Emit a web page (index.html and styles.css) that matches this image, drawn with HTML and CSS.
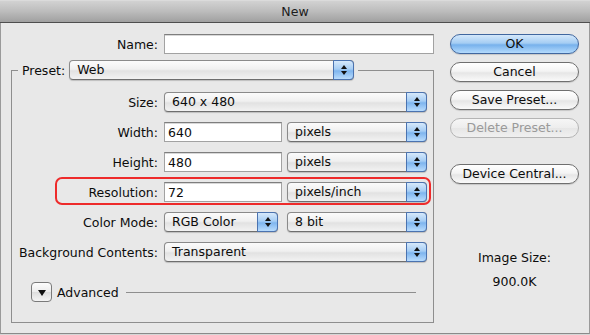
FILE: index.html
```html
<!DOCTYPE html>
<html>
<head>
<meta charset="utf-8">
<link rel="stylesheet" href="styles.css">
</head>
<body>
<div class="window">
  <div class="titlebar">New</div>
  <div class="main">
    <div class="left">
      <div class="row name-row">
        <span class="label">Name:</span>
        <div class="controls"><div class="input name-input"></div></div>
      </div>
      <div class="group">
        <div class="legend">
          <span class="legend-label">Preset:</span>
          <div class="popup preset-popup"><span class="popup-text">Web</span><span class="popup-arrow"><i class="up"></i><i class="down"></i></span></div>
        </div>
        <div class="rows">
          <div class="row">
            <span class="label">Size:</span>
            <div class="controls"><div class="popup full"><span class="popup-text">640 x 480</span><span class="popup-arrow"><i class="up"></i><i class="down"></i></span></div></div>
          </div>
          <div class="row">
            <span class="label">Width:</span>
            <div class="controls"><div class="input num">640</div><div class="popup unit"><span class="popup-text">pixels</span><span class="popup-arrow"><i class="up"></i><i class="down"></i></span></div></div>
          </div>
          <div class="row">
            <span class="label">Height:</span>
            <div class="controls"><div class="input num">480</div><div class="popup unit"><span class="popup-text">pixels</span><span class="popup-arrow"><i class="up"></i><i class="down"></i></span></div></div>
          </div>
          <div class="row">
            <span class="label">Resolution:</span>
            <div class="controls"><div class="input num">72</div><div class="popup unit"><span class="popup-text">pixels/inch</span><span class="popup-arrow"><i class="up"></i><i class="down"></i></span></div></div>
          </div>
          <div class="row">
            <span class="label">Color Mode:</span>
            <div class="controls wide-gap"><div class="popup color"><span class="popup-text">RGB Color</span><span class="popup-arrow"><i class="up"></i><i class="down"></i></span></div><div class="popup unit"><span class="popup-text">8 bit</span><span class="popup-arrow"><i class="up"></i><i class="down"></i></span></div></div>
          </div>
          <div class="row">
            <span class="label">Background Contents:</span>
            <div class="controls"><div class="popup full"><span class="popup-text">Transparent</span><span class="popup-arrow"><i class="up"></i><i class="down"></i></span></div></div>
          </div>
        </div>
        <div class="advanced">
          <span class="disclosure"><i></i></span>
          <span class="adv-label">Advanced</span>
          <span class="adv-line"></span>
        </div>
      </div>
    </div>
    <div class="right">
      <div class="btn default">OK</div>
      <div class="btn">Cancel</div>
      <div class="btn">Save Preset...</div>
      <div class="btn disabled">Delete Preset...</div>
      <div class="btn device">Device Central...</div>
      <div class="image-size">
        <div>Image Size:</div>
        <div class="size-val">900.0K</div>
      </div>
    </div>
  </div>
  <div class="highlight"></div>
</div>
</body>
</html>
```
FILE: styles.css
```css
html, body {
  margin: 0;
  padding: 0;
}
body {
  width: 590px;
  height: 335px;
  overflow: hidden;
  background: #d6d6d6;
  font-family: "DejaVu Sans", "Liberation Sans", sans-serif;
  font-size: 12.5px;
  color: #0c0c0c;
}
.window {
  position: relative;
  box-sizing: border-box;
  width: 590px;
  height: 334px;
  background: #e8e8e8;
  border-left: 1px solid #9a9a9a;
  border-right: 1px solid #9a9a9a;
  border-bottom: 1px solid #8a8a8a;
}
.titlebar {
  height: 22px;
  line-height: 23px;
  text-align: center;
  font-size: 12.5px;
  color: #1c1c1c;
  background: linear-gradient(#e4e4e4 0, #d2d2d2 1px, #bdbdbd 50%, #a0a0a0 100%);
  border-bottom: 1px solid #4e4e4e;
  margin: 0 -1px;
}
.main {
  display: flex;
  padding: 11px 0 0 10px;
}
.left {
  width: 423px;
}
.row {
  display: grid;
  grid-template-columns: 146px auto;
  column-gap: 6px;
  align-items: center;
  height: 20px;
}
.name-row {
  grid-template-columns: 147px auto;
}
.label {
  text-align: right;
  white-space: nowrap;
}
.controls {
  display: flex;
  gap: 5px;
  align-items: center;
}
.controls.wide-gap {
  gap: 9px;
}
.input {
  box-sizing: border-box;
  height: 20px;
  background: #fff;
  border: 1px solid #a2a2a2;
  border-top-color: #7e7e7e;
  box-shadow: inset 0 1px 0 #d8d8d8;
  padding: 0 3px;
  line-height: 19px;
}
.name-input {
  width: 270px;
}
.input.num {
  width: 118px;
}
.group {
  margin-top: 16px;
  border: 1px solid #8e8e8e;
  height: 251px;
}
.legend {
  display: flex;
  align-items: center;
  gap: 4px;
  width: max-content;
  margin: -11px 0 0 6px;
  padding: 0 4px;
  background: #e8e8e8;
  height: 20px;
}
.popup {
  box-sizing: border-box;
  display: flex;
  height: 20px;
  border: 1px solid #8a8a8a;
  border-bottom-color: #6e6e6e;
  border-radius: 4px;
  background: linear-gradient(#fbfbfb, #f0f0f0 45%, #e2e2e2 55%, #f2f2f2);
  box-shadow: 0 1px 1px rgba(0,0,0,0.18);
}
.popup-text {
  flex: 1;
  padding-left: 7px;
  line-height: 18px;
  white-space: nowrap;
  overflow: hidden;
}
.popup-arrow {
  width: 19px;
  margin: -1px -1px -1px 0;
  border: 1px solid #4b73b0;
  border-radius: 0 4px 4px 0;
  background: linear-gradient(#d6e9fb, #a6cdf4 45%, #7fb5ee 55%, #b9dcfd);
  display: flex;
  flex-direction: column;
  align-items: center;
  justify-content: center;
  gap: 2px;
}
.popup-arrow i {
  display: block;
  width: 0;
  height: 0;
  border-left: 3px solid transparent;
  border-right: 3px solid transparent;
}
.popup-arrow i.up {
  border-bottom: 4px solid #111;
}
.popup-arrow i.down {
  border-top: 4px solid #111;
}
.preset-popup {
  width: 285px;
}
.popup.full {
  width: 263px;
}
.popup.unit {
  width: 140px;
}
.popup.color {
  width: 114px;
}
.rows {
  display: flex;
  flex-direction: column;
  gap: 10px;
  margin-top: 12px;
}
.advanced {
  display: flex;
  align-items: center;
  margin: 20px 17px 0 19px;
  height: 20px;
}
.disclosure {
  box-sizing: border-box;
  width: 21px;
  height: 20px;
  border: 1px solid #7a7a7a;
  border-radius: 4px;
  background: linear-gradient(#fdfdfd, #ececec 50%, #dddddd 51%, #f4f4f4);
  display: flex;
  align-items: center;
  justify-content: center;
}
.disclosure i {
  display: block;
  width: 0;
  height: 0;
  border-left: 4px solid transparent;
  border-right: 4px solid transparent;
  border-top: 6px solid #111;
  margin-top: 1px;
}
.adv-label {
  margin-left: 5px;
}
.adv-line {
  flex: 1;
  height: 1px;
  background: #8e8e8e;
  margin-left: 7px;
}
.right {
  width: 129px;
  margin-left: 16px;
  display: flex;
  flex-direction: column;
  gap: 8px;
}
.btn {
  box-sizing: border-box;
  height: 20px;
  border: 1px solid #6f6f6f;
  border-radius: 10px;
  background: linear-gradient(#ffffff, #f4f4f4 45%, #e6e6e6 55%, #fafafa);
  text-align: center;
  line-height: 18px;
  box-shadow: 0 1px 1px rgba(0,0,0,0.15);
}
.btn.default {
  border-color: #41679f;
  background: linear-gradient(#d4e8fb, #a5cdf3 45%, #77b1ec 55%, #b4dbfd);
}
.btn.disabled {
  color: #9a9a9a;
  border-color: #b4b4b4;
  box-shadow: none;
  background: linear-gradient(#f6f6f6, #ededed 50%, #e6e6e6 51%, #f0f0f0);
}
.btn.device {
  margin-top: 18px;
}
.image-size {
  margin-top: 58px;
  text-align: center;
  line-height: 16px;
}
.size-val {
  margin-top: 8px;
}
.highlight {
  position: absolute;
  left: 54px;
  top: 177px;
  width: 376px;
  height: 28px;
  box-sizing: border-box;
  border: 2px solid #ee2b2b;
  border-radius: 7px;
}
```
